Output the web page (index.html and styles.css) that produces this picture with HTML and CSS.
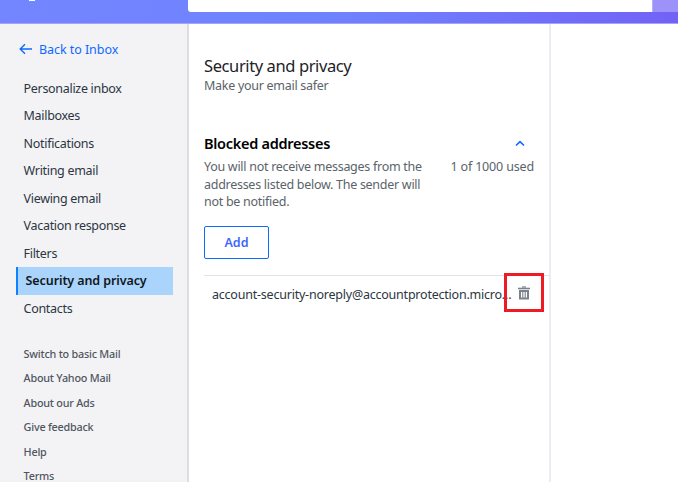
FILE: index.html
```html
<!DOCTYPE html>
<html lang="en">
  <head>
    <meta charset="UTF-8" />
    <meta name="viewport" content="width=device-width, initial-scale=1.0" />
    <title>Security and privacy</title>
    <link rel="stylesheet" href="styles.css">
  </head>
  <body>
    <header class="topbar">
      <div class="logo-tail"></div>
      <div class="search-box"></div>
      <div class="search-btn"></div>
    </header>
    <div class="layout">
      <aside class="sidebar">
        <a class="back-link">
          <svg width="14" height="12" viewBox="0 0 14 12" fill="none" stroke="#0f69ff" stroke-width="1.4">
            <path d="M13 6H1.5M6 1.2L1.2 6l4.8 4.8" />
          </svg>
          <span>Back to Inbox</span>
        </a>
        <ul class="menu">
          <li>Personalize inbox</li>
          <li>Mailboxes</li>
          <li>Notifications</li>
          <li>Writing email</li>
          <li>Viewing email</li>
          <li>Vacation response</li>
          <li>Filters</li>
          <li class="active">Security and privacy</li>
          <li>Contacts</li>
        </ul>
        <ul class="links">
          <li>Switch to basic Mail</li>
          <li>About Yahoo Mail</li>
          <li>About our Ads</li>
          <li>Give feedback</li>
          <li>Help</li>
          <li>Terms</li>
        </ul>
      </aside>
      <main class="panel">
        <h1 class="title">Security and privacy</h1>
        <p class="subtitle">Make your email safer</p>
        <div class="section-head">
          <h2>Blocked addresses</h2>
          <svg width="10" height="7" viewBox="0 0 10 7" fill="none" stroke="#0f69ff" stroke-width="1.6">
            <path d="M1 5.5l4-3.8 4 3.8" />
          </svg>
        </div>
        <div class="section-info">
          <p class="desc">You will not receive messages from the<br>addresses listed below. The sender will<br>not be notified.</p>
          <p class="count">1 of 1000 used</p>
        </div>
        <button type="button" class="btn-add">Add</button>
        <div class="address-row">
          <span class="address">account-security-noreply@accountprotection.micro...</span>
          <span class="delete">
            <svg width="12" height="14" viewBox="0 0 12 14" fill="none" stroke="#7c828c">
              <path d="M4 1h4" stroke-width="1.2" />
              <path d="M0 2.5h12" stroke-width="1.6" />
              <path d="M2 5v7.5h8V5z" stroke-width="2" />
              <path d="M4.8 5v7M7.2 5v7" stroke-width="1.1" />
            </svg>
          </span>
        </div>
      </main>
    </div>
  </body>
</html>
```
FILE: styles.css
```css
* {
  box-sizing: border-box;
}

body {
  margin: 0;
  height: 482px;
  overflow: hidden;
  display: flex;
  flex-direction: column;
  background-color: #fff;
  color: #2c363f;
  font-family: "Noto Sans", "Open Sans", sans-serif;
  font-size: 12.5px;
  letter-spacing: -0.28px;
}

h1,
h2,
p,
ul {
  margin: 0;
  padding: 0;
}

ul {
  list-style: none;
}

li,
span,
p,
h1,
h2 {
  white-space: nowrap;
}

/* top bar */
.topbar {
  flex: none;
  display: flex;
  height: 24px;
  background: linear-gradient(to right, #7385ff, #6f82fe 50%, #7262f6);
  border-bottom: 1px solid #a5a4fb;
}

.logo-tail {
  width: 6px;
  height: 1px;
  margin-left: 29px;
  background-color: #fff;
}

.search-box {
  width: 464px;
  height: 12px;
  margin-left: 153px;
  background-color: #fff;
  border-radius: 0 0 0 3px;
}

.search-btn {
  flex: 1;
  height: 12px;
  background-color: #9d91fa;
  border-left: 1px solid #b8b0fc;
}

.layout {
  flex: 1;
  display: flex;
  min-height: 0;
}

/* left menu */
.sidebar {
  flex: none;
  width: 189px;
  padding-top: 15px;
  background-color: #f3f3f6;
  border-right: 2px solid #dddde0;
}

.back-link {
  display: flex;
  align-items: center;
  gap: 6px;
  height: 20px;
  margin-left: 19px;
  color: #0f69ff;
  letter-spacing: -0.06px;
}

.menu {
  margin: 15.9px 14px 0 16px;
}

.menu li {
  height: 27.5px;
  padding-left: 7.6px;
  letter-spacing: -0.31px;
  line-height: 28px;
}

.menu .active {
  padding-left: 7.6px;
  background-color: #aad4fc;
  border-left: 2px solid #0f80ff;
  color: #101820;
  font-weight: 600;
  letter-spacing: -0.1px;
}

.links {
  margin: 19.6px 0 0 23.6px;
  color: #50565e;
  font-size: 10.8px;
  font-weight: 500;
  letter-spacing: -0.22px;
}

.links li {
  height: 24.5px;
  line-height: 24.5px;
}

/* settings panel */
.panel {
  width: 362px;
  padding: 30px 0 0 15px;
  border-right: 2px solid #ececf4;
}

.title {
  color: #1d2228;
  font-size: 16.5px;
  font-weight: 400;
  letter-spacing: -0.4px;
  line-height: 24px;
}

.subtitle {
  color: #5b636a;
  line-height: 16px;
}

.section-head {
  display: flex;
  align-items: center;
  justify-content: space-between;
  height: 20px;
  margin-top: 39px;
  padding-right: 24px;
}

.section-head h2 {
  color: #000;
  font-size: 14.5px;
  font-weight: 600;
}

.section-info {
  display: flex;
  justify-content: space-between;
  margin-top: 5px;
  padding-right: 15px;
  color: #5b636a;
  line-height: 17.5px;
}

.count {
  letter-spacing: -0.16px;
}

.btn-add {
  display: block;
  width: 65px;
  height: 33px;
  margin-top: 15px;
  padding: 0;
  background-color: #fff;
  border: 1px solid #0f69ff;
  border-radius: 2px;
  color: #3d66ff;
  font-family: inherit;
  font-size: 12.5px;
  font-weight: 600;
}

.address-row {
  display: flex;
  height: 38px;
  margin-top: 16px;
  padding-left: 8px;
  border-top: 1px solid #e0e4e9;
  line-height: 37px;
}

.address {
  width: 292px;
  letter-spacing: -0.22px;
}

/* marked delete button, sits over the row divider */
.delete {
  flex: none;
  display: flex;
  align-items: center;
  justify-content: center;
  width: 40px;
  height: 39px;
  margin-top: -3px;
  padding-top: 2px;
  border: 3px solid #ed1c24;
}
```
